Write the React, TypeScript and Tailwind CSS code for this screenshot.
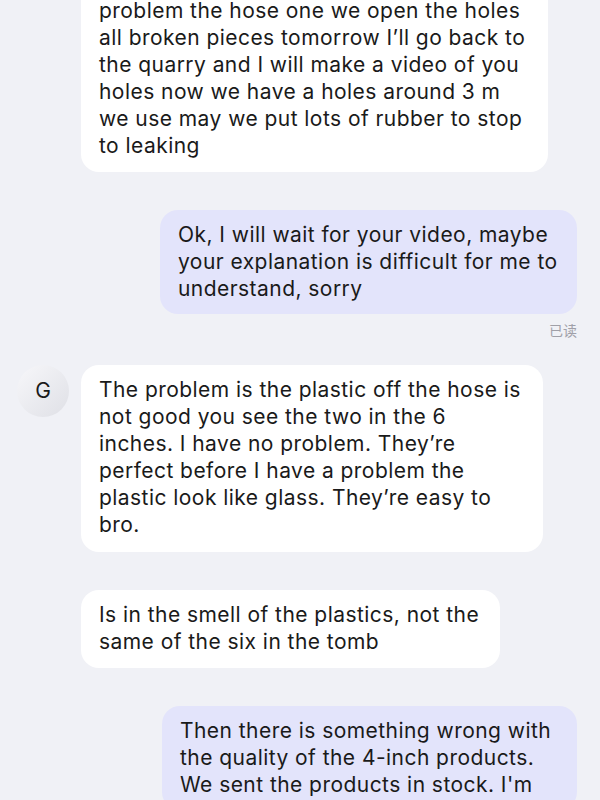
import React from "react";

const font = { fontFamily: "Inter, 'Noto Sans CJK SC', sans-serif" };

function Bubble({
  lines,
  w,
  self,
  extra = "",
}: {
  lines: string[];
  w: string;
  self?: boolean;
  extra?: string;
}) {
  return (
    <div
      className={`${w} ${extra} rounded-[18px] pl-[18px] pr-3 pt-[11px] text-[21px] leading-[27px] tracking-[0.45px] text-[#1a1a1a] ${
        self ? "bg-[#e3e4fb]" : "bg-white"
      }`}
    >
      {lines.map((l, i) => (
        <div key={i} className="whitespace-nowrap">
          {l}
        </div>
      ))}
    </div>
  );
}

export default function App() {
  return (
    <div className="w-[600px] h-[800px] overflow-hidden bg-[#f0f1f6]" style={font}>
      <div className="mt-[-14px] flex flex-col">
        <div className="pl-[81px]">
          <Bubble
            w="w-[467px]"
            extra="pb-[13px] rounded-t-none"
            lines={[
              "problem the hose one we open the holes",
              "all broken pieces tomorrow I’ll go back to",
              "the quarry and I will make a video of you",
              "holes now we have a holes around 3 m",
              "we use may we put lots of rubber to stop",
              "to leaking",
            ]}
          />
        </div>
        <div className="mt-[38px] flex justify-end pr-[23px]">
          <Bubble
            self
            w="w-[417px]"
            extra="pb-[12px]"
            lines={[
              "Ok, I will wait for your video, maybe",
              "your explanation is difficult for me to",
              "understand, sorry",
            ]}
          />
        </div>
        <div className="mt-[7px] pr-[23px] text-right text-[14px] leading-[20px] text-[#a0a0a8]">已读</div>
        <div className="mt-[24px] flex items-start">
          <div className="ml-[17px] w-[52px] h-[52px] rounded-full bg-gradient-to-br from-[#f7f7fa] to-[#dfe0e6] flex items-center justify-center text-[21px] text-[#1a1a1a]">
            G
          </div>
          <div className="ml-[12px]">
            <Bubble
              w="w-[462px]"
              extra="pb-[14px]"
              lines={[
                "The problem is the plastic off the hose is",
                "not good you see the two in the 6",
                "inches. I have no problem. They’re",
                "perfect before I have a problem the",
                "plastic look like glass. They’re easy to",
                "bro.",
              ]}
            />
          </div>
        </div>
        <div className="mt-[38px] pl-[81px]">
          <Bubble
            w="w-[419px]"
            extra="pb-[13px]"
            lines={["Is in the smell of the plastics, not the", "same of the six in the tomb"]}
          />
        </div>
        <div className="mt-[38px] flex justify-end pr-[23px]">
          <Bubble
            self
            w="w-[415px]"
            extra="pb-[12px]"
            lines={[
              "Then there is something wrong with",
              "the quality of the 4-inch products.",
              "We sent the products in stock. I'm",
            ]}
          />
        </div>
      </div>
    </div>
  );
}
